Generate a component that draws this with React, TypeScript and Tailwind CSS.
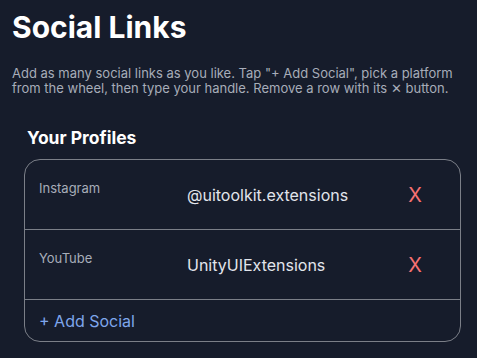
const profiles = [
  { platform: "Instagram", handle: "@uitoolkit.extensions" },
  { platform: "YouTube", handle: "UnityUIExtensions" },
];

export default function App() {
  return (
    <div
      className="min-h-screen w-[477px] h-[358px] overflow-hidden bg-[#161c2b] text-white"
      style={{ fontFamily: "Inter, 'Noto Sans', sans-serif" }}
    >
      <div className="px-[12px] pt-[8px]">
        <h1 className="text-[30px] font-bold leading-[38px]">Social Links</h1>
        <p className="mt-[20px] text-[13px] leading-[15px] text-[#a7adb9]">
          Add as many social links as you like. Tap "+ Add Social", pick a platform
          from the wheel, then type your handle. Remove a row with its ✕ button.
        </p>
      </div>

      <div className="pl-[24px] pr-[16px] pt-[31px]">
        <h2 className="pl-[3px] text-[17.5px] font-bold leading-[22px]">Your Profiles</h2>

        <div className="mt-[10px] rounded-[16px] border border-[#7b7f88]">
          {profiles.map((p) => (
            <div
              key={p.platform}
              className="flex h-[70px] items-center border-b border-[#7b7f88] pl-[14px] pr-[38px]"
            >
              <div className="w-[148px] self-start pt-[19px] text-[13px] text-[#a7adb9]">
                {p.platform}
              </div>
              <div className="flex-1 text-[16px] text-[#e2e5ec]">{p.handle}</div>
              <button className="text-[20px] leading-none text-[#f87171]">X</button>
            </div>
          ))}
          <div className="flex h-[41px] items-center pl-[14px]">
            <button className="text-[16px] text-[#7ea6ec]">+ Add Social</button>
          </div>
        </div>
      </div>
    </div>
  );
}
